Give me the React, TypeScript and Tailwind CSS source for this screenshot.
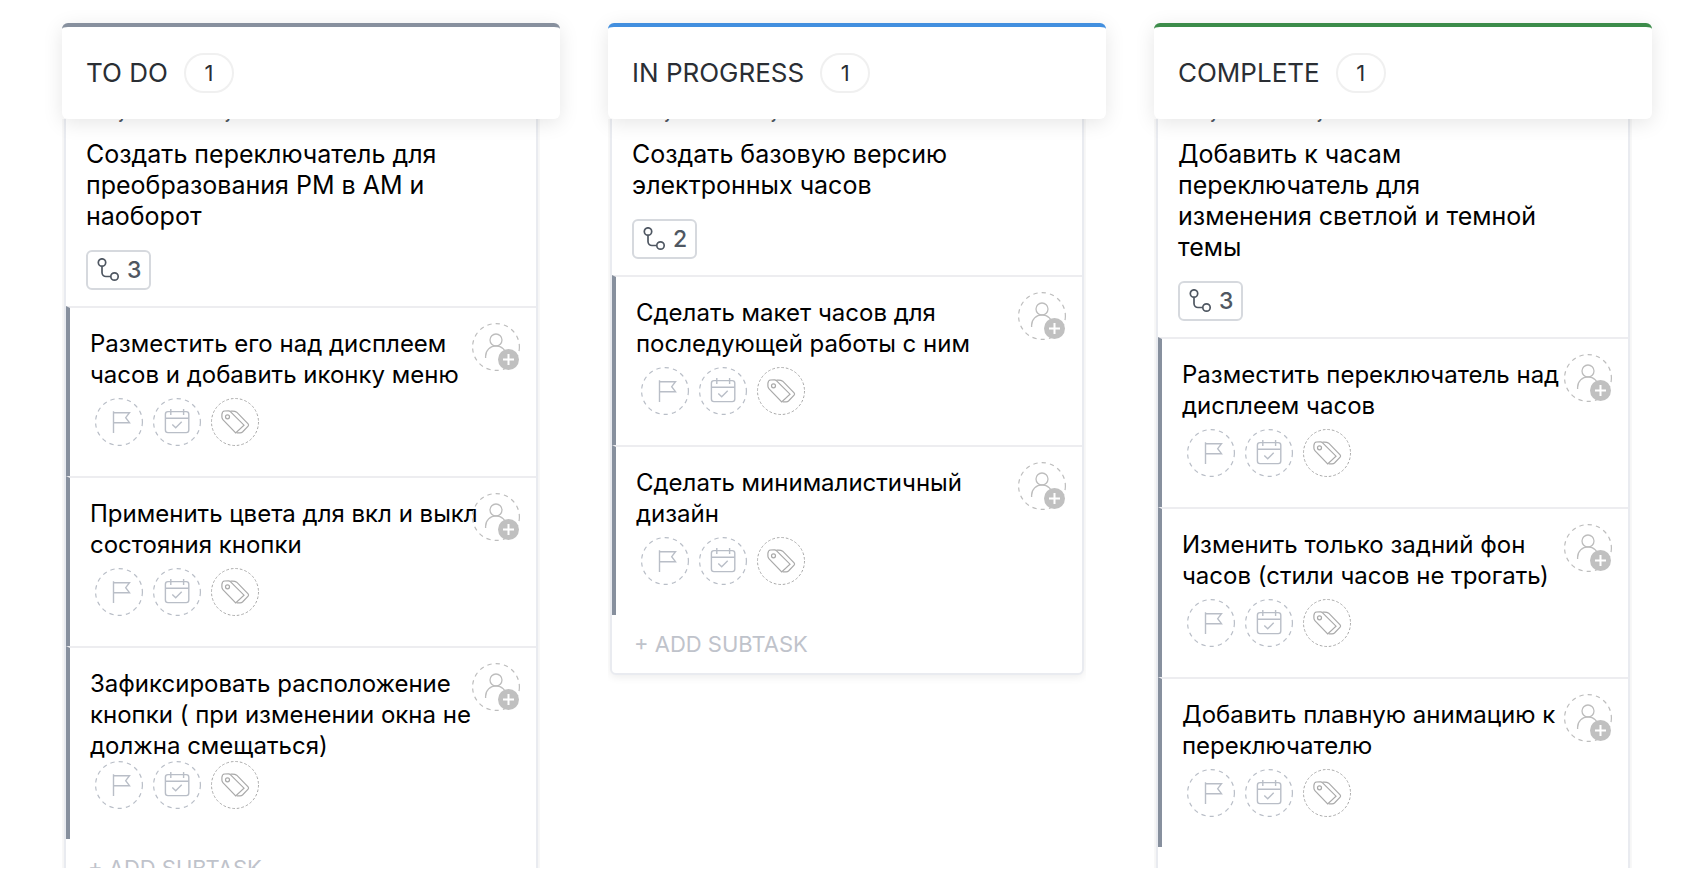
import { useId } from "react";

type Task = { title: string; subtasks: string[] };
type ColumnData = { name: string; accent: string; task: Task };

const columns: ColumnData[] = [
  {
    name: "TO DO",
    accent: "border-t-[#87909e]",
    task: {
      title: "Создать переключатель для преобразования PM в AM и наоборот",
      subtasks: [
        "Разместить его над дисплеем часов и добавить иконку меню",
        "Применить цвета для вкл и выкл состояния кнопки",
        "Зафиксировать расположение кнопки ( при изменении окна не должна смещаться)",
      ],
    },
  },
  {
    name: "IN PROGRESS",
    accent: "border-t-[#428fdf]",
    task: {
      title: "Создать базовую версию электронных часов",
      subtasks: [
        "Сделать макет часов для последующей работы с ним",
        "Сделать минималистичный дизайн",
      ],
    },
  },
  {
    name: "COMPLETE",
    accent: "border-t-[#3c8c4a]",
    task: {
      title: "Добавить к часам переключатель для изменения светлой и темной темы",
      subtasks: [
        "Разместить переключатель над дисплеем часов",
        "Изменить только задний фон часов (стили часов не трогать)",
        "Добавить плавную анимацию к переключателю",
      ],
    },
  },
];

function SubtaskIcon() {
  return (
    <svg className="size-6" viewBox="0 0 24 24" fill="none" stroke="#4f5762" strokeWidth="1.7" aria-hidden="true">
      <circle cx="5" cy="4.500" r="3.700" />
      <circle cx="17.500" cy="18.500" r="3.700" />
      <path d="M5 8.200v6.300a4 4 0 0 0 4 4h4.800" />
    </svg>
  );
}

function FlagIcon() {
  return (
    <svg className="size-12" viewBox="0 0 48 48" fill="none" stroke="#b9bec7" aria-hidden="true">
      <circle cx="24" cy="24" r="23.400" strokeDasharray="4.300 4.100" strokeWidth="1.200" />
      <path d="M18.500 13.200V35M18.500 14.700h16l-3.800 5 3.800 5H18.500" strokeWidth="1.400" />
    </svg>
  );
}

function CalendarIcon() {
  return (
    <svg className="size-12" viewBox="0 0 48 48" fill="none" stroke="#b9bec7" aria-hidden="true">
      <circle cx="24" cy="24" r="23.400" strokeDasharray="4.300 4.100" strokeWidth="1.200" />
      <rect x="12.400" y="13.600" width="23.400" height="21" rx="2.600" strokeWidth="1.400" />
      <path d="M12.400 20.200h23.400M17.800 11v6M30.600 11v6" strokeWidth="1.400" />
      <path d="m19.300 26.600 3.400 3.100 6-6" strokeWidth="1.400" />
    </svg>
  );
}

function TagsIcon() {
  return (
    <svg className="size-12" viewBox="0 0 48 48" fill="none" stroke="#a9a9a9" aria-hidden="true">
      <circle cx="24" cy="24" r="23.500" strokeDasharray="2.600 2" />
      <path d="M10.900 16.500q.2-3.300 2.600-3.500l4-.1q1.200 0 2.100.9l13.400 13.400-8.300 7.800-12.600-13.200q-1.100-1.100-1.200-2.500z" strokeWidth="1.200" />
      <circle cx="16.500" cy="18.800" r="2" strokeWidth="1.200" />
      <path d="M19.500 13.200q4.200-.5 6.200 1l11.400 11.600q1 1.200 0 2.400l-5.600 5.800q-1 .9-2.400.9h-3.400" strokeWidth="1.200" />
    </svg>
  );
}

function AssigneeIcon() {
  return (
    <svg className="size-12" viewBox="0 0 48 48" fill="none" stroke="#bdbdbd" aria-hidden="true">
      <circle cx="24" cy="24" r="23.400" strokeDasharray="4.300 4.100" strokeWidth="1.200" />
      <circle cx="24" cy="17" r="6" strokeWidth="1.300" />
      <path d="M13.600 35v-1.800a10.400 10.400 0 0 1 20.800 0" strokeWidth="1.300" />
      <circle cx="36.500" cy="36.500" r="10.500" fill="#c0c0c0" stroke="none" />
      <path d="M36.500 31v11M31 36.500h11" stroke="#fff" strokeWidth="2" />
    </svg>
  );
}

function Subtask({ text }: { text: string }) {
  return (
    <li className="relative border-t-2 border-l-4 border-t-[#ededf0] border-l-[#87909e] pt-5 pr-[52px] pb-[30px] pl-5">
      <p className="min-h-[70px] text-2xl leading-[31px] text-black">{text}</p>
      <div className="ml-[5px] flex gap-[10px]">
        <button type="button" aria-label="Set priority" className="rounded-full"><FlagIcon /></button>
        <button type="button" aria-label="Set due date" className="rounded-full"><CalendarIcon /></button>
        <button type="button" aria-label="Add tags" className="rounded-full"><TagsIcon /></button>
      </div>
      <button type="button" aria-label="Assign" className="absolute top-[15px] right-4 rounded-full">
        <AssigneeIcon />
      </button>
    </li>
  );
}

function Column({ name, accent, task }: ColumnData) {
  const id = useId();
  return (
    <section aria-labelledby={id} className="flex min-h-0 min-w-0 flex-1 flex-col">
      <header className={`relative z-10 flex h-24 shrink-0 items-center gap-4 rounded-md border-t-4 bg-white px-6 shadow-[0_4px_20px_rgba(0,0,0,0.1)] ${accent}`}>
        <h2 id={id} className="text-[26px] leading-8 text-[#2a2e34]">{name}</h2>
        <span className="flex h-10 w-[50px] items-center justify-center rounded-full border-2 border-[#f0f0f0] text-[22px] leading-7 text-[#2a2e34]">1</span>
      </header>
      <div className="mr-5 min-h-0 flex-1 overflow-hidden px-[2px]">
        <article className="-mt-[25px] mb-4 rounded-md border-2 border-[#e9ebf0] bg-white shadow-[0_2px_8px_rgba(0,0,0,0.08)]">
          <div className="pr-[72px] pb-4 pl-5">
            <p className="text-[21px] leading-[30px] text-[#4f5762]">Projects &gt; Project</p>
            <h3 className="mt-[13px] text-[25px] leading-[31px] text-black">{task.title}</h3>
            <div className="mt-[18px] flex h-10 w-[65px] items-center gap-[6px] rounded-md border-2 border-[#d6d9de] pl-[9px] text-[23px] font-medium text-[#4f5762]">
              <SubtaskIcon />
              {task.subtasks.length}
            </div>
          </div>
          <ul>
            {task.subtasks.map((text) => <Subtask key={text} text={text} />)}
          </ul>
          <button type="button" className="block px-[22px] py-[14px] text-[22px] leading-[30px] text-[#bfc3cb]">+ ADD SUBTASK</button>
        </article>
      </div>
    </section>
  );
}

export default function App() {
  return (
    <main className="h-screen bg-white pb-4 font-['Inter',sans-serif]">
      <div className="flex h-full gap-12 overflow-hidden pt-[23px] pr-8 pl-[62px]">
        {columns.map((column) => <Column key={column.name} {...column} />)}
      </div>
    </main>
  );
}
